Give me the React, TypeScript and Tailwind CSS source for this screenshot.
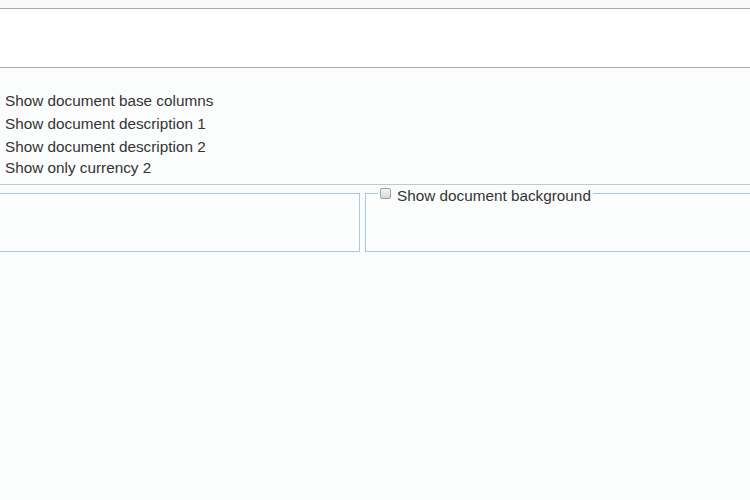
export default function App() {
  const options = [
    { label: "Show document base columns", cls: "h-[23px]" },
    { label: "Show document description 1", cls: "h-[23px]" },
    { label: "Show document description 2", cls: "h-[21px]" },
    { label: "Show only currency 2", cls: "h-[20px]" },
  ];

  return (
    <div className="min-h-[500px] bg-[#fbfdfd] text-[#333] font-['Liberation_Sans',Arial,sans-serif] text-[15.3px] overflow-hidden">
      <div className="h-[9px] bg-[#fafafa] border-b border-[#a9a9a9]" />
      <div className="h-[59px] bg-white border-b border-[#a9a9a9]" />
      <div className="pt-[22px] pl-[5px] pb-[7px]">
        {options.map(({ label, cls }) => (
          <div key={label} className={`${cls} leading-[21px]`}>
            {label}
          </div>
        ))}
      </div>
      <div className="border-t border-[#b8cdd6]" />
      <div className="grid grid-cols-[370px_1fr] items-start gap-[5px] mt-[8px] ml-[-10px] mr-[-10px]">
        <fieldset className="border border-[#a6cbe0] h-[59px] min-w-0" />
        <fieldset className="border border-[#a6cbe0] h-[68px] -mt-[9px] px-[12px] min-w-0">
          <legend className="flex items-start gap-[6px] px-[2px] h-[18px]">
            <input
              type="checkbox"
              className="appearance-none w-[11px] h-[11px] m-0 mt-[4px] rounded-[2px] border border-[#a3a3a3] bg-gradient-to-b from-[#f2f2f2] to-[#d8d8d8]"
            />
            <span className="leading-[24px]">Show document background</span>
          </legend>
        </fieldset>
      </div>
    </div>
  );
}
